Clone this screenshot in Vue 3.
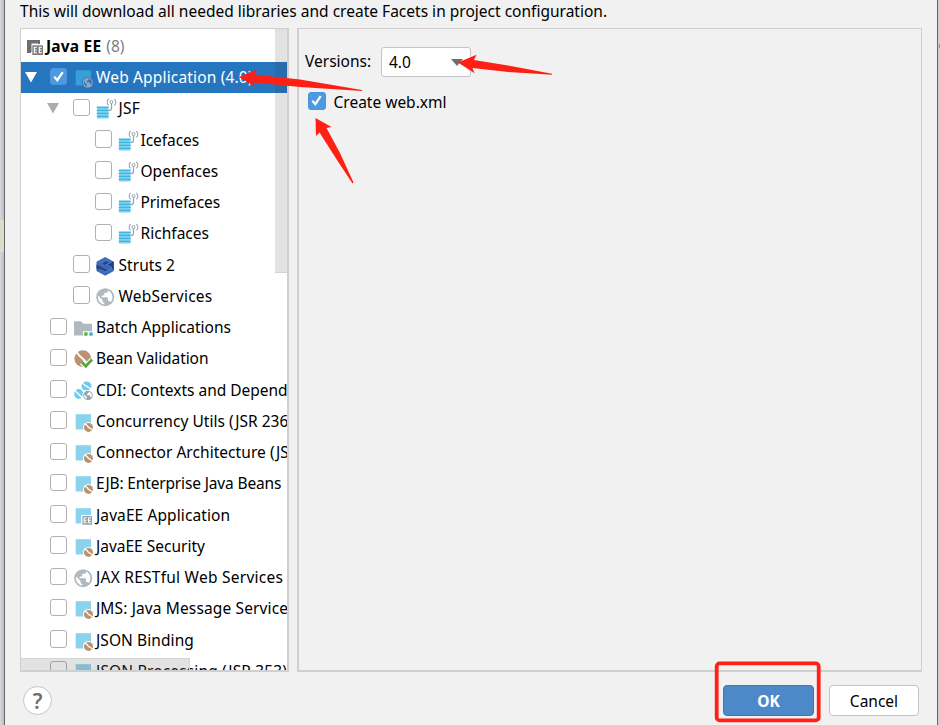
<script setup>
const rows = [
  { t: 'Web Application (4.0)', l: 1, i: 'web', sel: true, open: true, s: 0.16 },
  { t: 'JSF', l: 2, i: 'jsf', open: true, s: 0.3 },
  { t: 'Icefaces', l: 3, i: 'jsf', s: -0.05 },
  { t: 'Openfaces', l: 3, i: 'jsf', s: 0 },
  { t: 'Primefaces', l: 3, i: 'jsf', s: -0.12 },
  { t: 'Richfaces', l: 3, i: 'jsf', s: 0.03 },
  { t: 'Struts 2', l: 2, i: 'struts', s: 0.05 },
  { t: 'WebServices', l: 2, i: 'globe', s: 0.22 },
  { t: 'Batch Applications', l: 1, i: 'batch', s: 0.03 },
  { t: 'Bean Validation', l: 1, i: 'valid', s: -0.08 },
  { t: 'CDI: Contexts and Dependency Injection', l: 1, i: 'cdi', s: -0.01 },
  { t: 'Concurrency Utils (JSR 236)', l: 1, i: 'bean', s: 0.04 },
  { t: 'Connector Architecture (JSR 322)', l: 1, i: 'bean', s: 0.05 },
  { t: 'EJB: Enterprise Java Beans', l: 1, i: 'bean', s: -0.15 },
  { t: 'JavaEE Application', l: 1, i: 'ee', s: 0.1 },
  { t: 'JavaEE Security', l: 1, i: 'bean', s: 0 },
  { t: 'JAX RESTful Web Services', l: 1, i: 'globe', s: 0.25 },
  { t: 'JMS: Java Message Service', l: 1, i: 'bean', s: 0.13 },
  { t: 'JSON Binding', l: 1, i: 'bean', s: 0.08 },
  { t: 'JSON Processing (JSR 353)', l: 1, i: 'bean', s: 0.15 },
]
</script>

<template>
  <div class="window">
    <div class="edge left"><i></i></div>
    <main class="dialog">
      <p class="note">This will download all needed libraries and create Facets in project configuration.</p>
      <div class="panels">
        <section class="tree">
          <div class="row head">
            <svg class="icon" viewBox="0 0 20 20">
              <path d="M1 3h13v4h-2V6H3v8h2v2H1z" fill="#6e6e6e" />
              <path d="M1 3h13v3.500H5.500v8.500H1z" fill="#6e6e6e" />
              <path d="M6.300 8.300h10.700v9.700H6.300z" fill="#7d7d7d" />
              <path d="M11 10.300H8.300v5.400H11M8.300 13h2.400M16 10.300h-2.700v5.400H16M13.300 13h2.400" fill="none" stroke="#fff" stroke-width="1.100" />
            </svg>
            <b>Java EE</b><span class="count">(8)</span>
          </div>
          <div v-for="r in rows" :key="r.t" class="row" :class="['l' + r.l, { sel: r.sel }]">
            <span class="twist"><svg v-if="r.open" width="12" height="11" viewBox="0 0 12 11"><path d="M0 0h12L6 10.500z" fill="currentColor" /></svg></span>
            <span class="box" :class="{ on: r.sel }">
              <svg v-if="r.sel" viewBox="0 0 17 17"><path d="M4.300 8.800l3 3.400 5.400-8" /></svg>
            </span>
            <svg class="icon" viewBox="0 0 20 20">
              <template v-if="r.i === 'jsf'">
                <path d="M1 7.500h11.500v12H1z" fill="#7fd0ee" />
                <path d="M.7 8.400h12M.7 11.400h12M.7 14.400h12M.7 17.400h12" stroke="#3fb6e3" stroke-width="1.400" />
                <path d="M15.500 4v5.200c0 1.700-.8 2.300-2.700 2.300" fill="none" stroke="#9aa7b0" stroke-width="1.300" />
                <circle cx="15.500" cy="3" r="1.500" fill="none" stroke="#9aa7b0" />
                <path d="M12.600 0c-1.900 1.800-1.900 4.500 0 6.300M18.400 0c1.900 1.800 1.900 4.500 0 6.300" fill="none" stroke="#9aa7b0" stroke-width="1.100" />
              </template>
              <template v-else-if="r.i === 'struts'">
                <path d="M9.200 1l8.600 4.700v9.400l-8.600 4.700-8.700-4.700V5.700z" fill="#3b6bb8" />
                <path d="M14.800 6.300l3-.6v8l-4.500-2.500-6.800-3.600 3.200-2z" fill="#253f80" />
                <path d="M.5 8.500l8 4.200 3.500 1.600-4 2L.5 12.500z" fill="#253f80" />
                <path d="M3.500 7l5.700-3 5.400 2.500-4.300 2.200 5 2.700v1.700L9.200 16l-6-3" fill="none" stroke="#4879c4" stroke-width="1.300" />
              </template>
              <template v-else-if="r.i === 'globe'">
                <circle cx="9.200" cy="10.200" r="9" fill="#afb9c0" />
                <path d="M8.300 17.440A7.260 7.260 0 0 1 1.940 10.200c0-.56.080-1.100.2-1.620L6.500 13v.9c0 1 .8 1.800 1.800 1.800zM14.580 15.140a1.800 1.800 0 0 0-1.730-1.240h-.9v-2.700a.9.900 0 0 0-.9-.9H5.600V8.400h1.800a.9.900 0 0 0 .9-.9V5.700h1.800c1 0 1.800-.8 1.800-1.800v-.37a7.220 7.220 0 0 1 2.680 11.610z" fill="#fff" />
              </template>
              <template v-else-if="r.i === 'batch'">
                <path d="M0 3.200h7l2.500 2.600H18v7.400H9v4.200H0z" fill="#afb9c0" />
                <circle cx="11.900" cy="16" r="2" fill="#62b543" /><circle cx="17" cy="16" r="2" fill="#40b6e0" />
              </template>
              <template v-else-if="r.i === 'valid'">
                <circle cx="8.800" cy="9.600" r="8.400" fill="#b99271" />
                <path d="M2 2.500c2.500 3 4 5 6.500 7s3.500 3 5.500 7" fill="none" stroke="#fff" stroke-width="2" />
                <path d="M7.800 13.200l4 4.200 6.200-7" fill="none" stroke="#fff" stroke-width="5" />
                <path d="M7.800 13l4 4.200 6.200-6.600" fill="none" stroke="#59a83b" stroke-width="2.900" />
              </template>
              <template v-else-if="r.i === 'cdi'">
                <ellipse cx="12.500" cy="5" rx="5" ry="4.500" fill="#6fcbed" />
                <ellipse cx="4.700" cy="13" rx="4.500" ry="5" fill="#6fcbed" />
                <path d="M8.200 1.500c2 4 6 3 8.600 7M1 9c2 4 4.500 4 7 8" fill="none" stroke="#fff" stroke-width="1.400" />
                <circle cx="14" cy="14.500" r="5.600" fill="#fff" />
                <circle cx="14" cy="14.500" r="4.700" fill="#98a4ad" />
                <path d="M10.300 13.500l2.500 2.500v2c-2-.7-3-2.600-2.500-4.500zM14.600 10.800v1.300l-1.500 1v1.200h2.800l.8 2h.9c1-2.500-.4-5.200-3-5.500z" fill="#fff" />
              </template>
              <template v-else>
                <path d="M1.700 2.200h15.300v15.300H1.700z" :fill="r.i === 'web' ? '#389fd6' : '#8bd3ec'" />
                <template v-if="r.i === 'web'">
                  <circle cx="13.800" cy="14.700" r="5.800" fill="#2675bf" />
                  <circle cx="13.800" cy="14.700" r="5" fill="#8fa6b8" />
                  <path d="M9.900 13.500l2.700 2.700v2c-2-.7-3.200-2.700-2.700-4.700zM14.400 10.700v1.400l-1.500 1v1.200h2.800l.9 2.200h.9c1-2.600-.4-5.500-3.100-5.800z" fill="#2675bf" />
                </template>
                <template v-else-if="r.i === 'ee'">
                  <path d="M7.300 9H19v10.500H7.300z" fill="#fff" />
                  <path d="M8.500 10H18v8.800H8.500z" fill="#98a4ad" />
                  <path d="M12.700 11.800h-2.500v5h2.500M10.200 14.300h2.300M17 11.800h-2.500v5H17M14.500 14.300h2.300" fill="none" stroke="#fff" />
                </template>
                <template v-else>
                  <circle cx="14.500" cy="15.400" r="5.500" fill="#fff" />
                  <circle cx="14.500" cy="15.400" r="4.500" fill="#b99271" />
                  <path d="M10.500 12c2.500.3 2.800 2.300 4.200 3.400s3 1 4 3.200" fill="none" stroke="#fff" stroke-width="1.300" />
                </template>
              </template>
            </svg>
            <span class="label" :style="{ letterSpacing: r.s + 'px' }">{{ r.t }}</span>
          </div>
          <div class="vbar"></div>
          <div class="hbar"></div>
        </section>
        <section class="settings">
          <div class="field">
            <label>Versions:</label>
            <div class="select"><span>4.0</span><svg width="12" height="7" viewBox="0 0 12 7"><path d="M0 0h12L6 7z" fill="#6e6e6e" /></svg></div>
          </div>
          <div class="check">
            <span class="box on"><svg viewBox="0 0 17 17"><path d="M4.300 8.800l3 3.400 5.400-8" /></svg></span>
            <span>Create web.xml</span>
          </div>
        </section>
      </div>
      <footer>
        <button class="help">?</button>
        <button class="btn ok">OK</button>
        <button class="btn">Cancel</button>
      </footer>
    </main>
    <div class="edge right"><i></i></div>
    <svg class="marks" width="940" height="725" viewBox="0 0 940 725">
      <g fill="#ff2015">
        <path d="M239 77L257 69.200 254.500 74.500 300 79.500 362 90 362 91 300 87 253 82.500 255 86.800z" />
        <path d="M458 62.500L476.500 54.800 474 60 508 65.500 552 73.800 552 74.800 508 72 472.500 68 474.500 73.300z" />
        <path d="M315.500 118L331.500 127 326.500 128 340 153 353.500 182.500 352.500 183.500 337 160 319.500 132.500 316 136z" />
      </g>
      <rect x="716.700" y="663.400" width="102" height="57" rx="3" fill="none" stroke="#ff2015" stroke-width="3.800" />
    </svg>
  </div>
</template>

<style>
body { margin: 0; overflow: hidden; }
</style>
<style scoped>
* { box-sizing: border-box; }
.window { position: relative; display: flex; width: 940px; height: 725px; overflow: hidden; background: #f1f1f1; font: 15.5px/20px "Noto Sans", "Open Sans", sans-serif; color: #000; }
.edge { flex: none; }
.edge.left { width: 5px; padding-top: 220px; background: linear-gradient(90deg, #d8dadd, #c0c2c5 75%); border-right: 1px solid #66676a; }
.edge.left i { display: block; width: 4px; height: 32px; background: #dddccb; }
.edge.right { width: 3px; padding-top: 44px; background: #cfcfcf; border-left: 1px solid #66676a; }
.edge.right i { display: block; margin-left: 1px; width: 1px; height: 4px; background: #9e9d3f; }
.dialog { flex: 1; display: flex; flex-direction: column; padding: 0 15px; }
.note { flex: none; height: 28px; margin: 0; padding-top: 1px; white-space: nowrap; letter-spacing: .01px; }
.panels { flex: none; display: flex; gap: 8px; height: 644px; }
.tree { position: relative; width: 269px; padding-top: 1.75px; overflow: hidden; background: #fff; border: solid #cfcfcf; border-width: 1px 2px 2px 1px; }
.row { display: flex; align-items: flex-start; height: 31.25px; white-space: nowrap; }
.row .icon { flex: none; width: 20px; height: 20px; margin-top: 6px; overflow: visible; }
.head { padding-left: 5px; }
.head b { margin: 5px 0 0 0; letter-spacing: .2px; }
.count { margin: 5px 0 0 5px; color: #808080; }
.twist { flex: none; width: 28.500px; padding: 10px 0 0 4px; line-height: 0; color: #adadad; }
.l2 .twist { width: 51.500px; padding-left: 26px; }
.l3 .twist { width: 73.500px; }
.box { flex: none; width: 17.500px; height: 17.500px; margin: 5.600px 5.500px 0 0; border: 1.500px solid #b0b0b0; border-radius: 3px; background: #fff; }
.l1 .box { margin-right: 7px; }
.box.on { border-color: #4a94dc; background: #4d9ae1; }
.box svg { display: block; width: 17px; height: 17px; margin: -1px; fill: none; stroke: #fff; stroke-width: 2.200; }
.label { margin: 5px 0 0 2px; }
.l2 .label, .l3 .label { margin-left: 3px; }
.sel { background: #2675bf; color: #fff; }
.sel .twist { color: #fff; }
.vbar { position: absolute; top: 0; right: 0; width: 12px; height: 244px; background: rgba(60, 60, 60, .15); border-bottom: 1px solid #d4d4d4; }
.hbar { position: absolute; left: 0; bottom: 0; width: 169px; height: 12px; background: rgba(110, 110, 110, .2); border: solid #d4d4d4; border-width: 1px 1px 0 0; }
.settings { width: 625px; padding: 18px 0 0 6px; border: solid #cfcfcf; border-width: 1px 1px 2px 2px; }
.field { display: flex; align-items: center; height: 30px; }
.field label { width: 76px; padding-bottom: 2px; }
.select { display: flex; align-items: center; justify-content: space-between; width: 90px; height: 30px; padding: 0 7px; background: #fff; border: 1px solid #c4c4c4; border-radius: 3px; }
.check { display: flex; align-items: center; gap: 8px; margin: 15px 0 0 3px; height: 20px; }
.check .box { margin: -2px 0 0; }
footer { display: flex; align-items: flex-start; padding: 13px 3px 0; }
button { padding: 0; font: inherit; background: #fff; border: 1px solid #c4c4c4; }
.help { width: 29px; height: 29px; margin: 1px auto 0 0; border-radius: 50%; font-size: 21px; font-weight: 600; color: #6e6e6e; }
.btn { width: 90px; height: 31px; border-radius: 4px; }
.btn.ok { width: 91px; margin-right: 15px; color: #fff; font-weight: 700; background: #4d89c9; border-color: #3d74b4; }
.marks { position: absolute; inset: 0; pointer-events: none; }
</style>
